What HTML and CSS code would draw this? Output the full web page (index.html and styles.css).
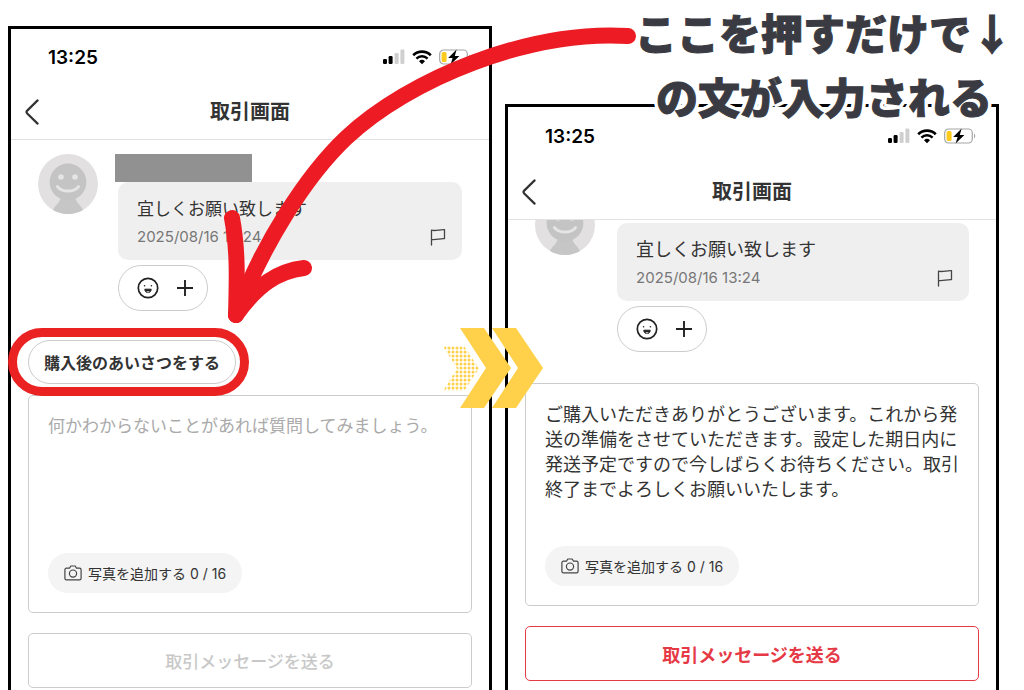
FILE: index.html
```html
<!DOCTYPE html>
<html lang="ja">
  <head>
    <meta charset="UTF-8" />
    <meta name="viewport" content="width=device-width, initial-scale=1.0" />
    <title>取引画面</title>
    <link rel="stylesheet" href="styles.css">
  </head>
  <body>
    <!-- Shared icons -->
    <svg class="icon-sprite" aria-hidden="true">
      <symbol id="icon-signal" viewBox="0 0 22 16">
        <rect x="0" y="10" width="4" height="5" rx="1.2" />
        <rect x="5.6" y="7" width="4" height="8" rx="1.2" />
        <rect x="11.6" y="4" width="4" height="11" rx="1.2" fill="#cfcfcf" />
        <rect x="17.4" y="0.5" width="4" height="14.5" rx="1.2" fill="#cfcfcf" />
      </symbol>
      <symbol id="icon-wifi" viewBox="0 0 20 16">
        <path d="M1.2 6.2a12.6 12.6 0 0 1 17.6 0" fill="none" stroke="#000" stroke-width="2.6" />
        <path d="M4.4 9.6a8 8 0 0 1 11.2 0" fill="none" stroke="#000" stroke-width="2.4" />
        <path d="M10 15.2l-3-3a4.4 4.4 0 0 1 6 0z" />
      </symbol>
      <symbol id="icon-battery" viewBox="0 0 32 16">
        <rect x="0.7" y="1" width="27.6" height="14" rx="4" fill="#fff" stroke="#a5a5a5" stroke-width="1.2" />
        <rect x="2.6" y="3" width="5" height="10" rx="1.6" fill="#fdcb1d" />
        <path d="M30 5.6c1.6.7 1.6 4.1 0 4.8z" fill="#a5a5a5" />
        <path d="M17.6 0.5L9.2 9h4.4l-2 6.6L20.4 7h-4.6z" />
      </symbol>
      <symbol id="icon-back" viewBox="0 0 14 26">
        <path d="M12.6 1.4L2.2 11.6a2 2 0 0 0 0 2.8l10.4 10.2" fill="none" stroke="#333" stroke-width="2.2" stroke-linecap="round" />
      </symbol>
      <symbol id="icon-avatar" viewBox="0 0 60 60">
        <circle cx="30" cy="30" r="30" fill="#e2e0e0" />
        <path d="M15 56c2-5 7-7 8-13h14c1 6 6 8 8 13a30 30 0 0 1-30 0z" fill="#c6c6c6" />
        <circle cx="30" cy="28" r="18.4" fill="#c4c4c4" />
        <circle cx="23" cy="23" r="2.8" fill="#e6e4e4" />
        <circle cx="37" cy="23" r="2.8" fill="#e6e4e4" />
        <path d="M19.4 32.6c5 6 16.2 6 21.2 0" fill="none" stroke="#e6e4e4" stroke-width="3" stroke-linecap="round" />
      </symbol>
      <symbol id="icon-flag" viewBox="0 0 16 18">
        <path d="M1.5 17V2.2c4.500 1.2 8.500-1 13-.6v9c-4.500-.4-8.500 1.600-13 .8" fill="none" stroke="#444" stroke-width="1.3" stroke-linecap="round" stroke-linejoin="round" />
      </symbol>
      <symbol id="icon-smile" viewBox="0 0 22 22">
        <circle cx="11" cy="11" r="9.7" fill="none" stroke="#222" stroke-width="1.7" />
        <circle cx="7.6" cy="8.8" r="0.8" fill="#222" />
        <circle cx="14.4" cy="8.8" r="0.8" fill="#222" />
        <path d="M7.8 12.2h6.400c0 4.600-6.400 4.600-6.400 0z" fill="#222" stroke="#222" stroke-linejoin="round" />
        <path d="M9.2 14.800c1-.8 2.600-.8 3.600 0-1 .9-2.600.9-3.600 0z" fill="#fff" />
      </symbol>
      <symbol id="icon-plus" viewBox="0 0 18 18">
        <path d="M9 1v16M1 9h16" fill="none" stroke="#222" stroke-width="1.9" />
      </symbol>
      <symbol id="icon-camera" viewBox="0 0 18 16">
        <path d="M2.500 3.200h3L6.800 1h4.400l1.300 2.200h3a1.600 1.600 0 0 1 1.600 1.600v8.400a1.600 1.600 0 0 1-1.600 1.600h-13A1.600 1.600 0 0 1 .9 13.200V4.800a1.600 1.600 0 0 1 1.600-1.600z" fill="none" stroke="#444" stroke-width="1.2" stroke-linejoin="round" />
        <circle cx="9" cy="8.6" r="3.6" fill="none" stroke="#444" stroke-width="1.2" />
      </symbol>
    </svg>

    <main class="guide">
      <section class="phone phone-before">
        <div class="phone-top">
          <div class="status-bar">
            <span class="time">13:25</span>
            <span class="status-icons">
              <svg width="22" height="16"><use href="#icon-signal" /></svg>
              <svg width="20" height="16"><use href="#icon-wifi" /></svg>
              <svg width="32" height="16"><use href="#icon-battery" /></svg>
            </span>
          </div>
          <header class="nav-bar">
            <button type="button" class="back-button" aria-label="戻る">
              <svg width="14" height="26"><use href="#icon-back" /></svg>
            </button>
            <h1>取引画面</h1>
          </header>
        </div>

        <div class="chat">
          <svg class="avatar" width="60" height="60"><use href="#icon-avatar" /></svg>
          <div class="message">
            <div class="name-mask"></div>
            <div class="bubble">
              <p class="bubble-text">宜しくお願い致します</p>
              <time class="bubble-date">2025/08/16 13:24</time>
              <button type="button" class="flag-button" aria-label="報告">
                <svg width="16" height="18"><use href="#icon-flag" /></svg>
              </button>
            </div>
            <button type="button" class="reaction" aria-label="リアクションを追加">
              <svg width="22" height="22"><use href="#icon-smile" /></svg>
              <svg width="18" height="18"><use href="#icon-plus" /></svg>
            </button>
          </div>
        </div>

        <form class="message-form">
          <button type="button" class="greeting-button">購入後のあいさつをする</button>
          <div class="composer">
            <textarea aria-label="メッセージ" placeholder="何かわからないことがあれば質問してみましょう。"></textarea>
            <button type="button" class="photo-button">
              <svg width="18" height="16"><use href="#icon-camera" /></svg>
              写真を追加する 0 / 16
            </button>
          </div>
          <button type="button" class="send-button" disabled>取引メッセージを送る</button>
        </form>
      </section>

      <section class="phone phone-after">
        <div class="phone-top">
          <div class="status-bar">
            <span class="time">13:25</span>
            <span class="status-icons">
              <svg width="22" height="16"><use href="#icon-signal" /></svg>
              <svg width="20" height="16"><use href="#icon-wifi" /></svg>
              <svg width="32" height="16"><use href="#icon-battery" /></svg>
            </span>
          </div>
          <header class="nav-bar">
            <button type="button" class="back-button" aria-label="戻る">
              <svg width="14" height="26"><use href="#icon-back" /></svg>
            </button>
            <h1>取引画面</h1>
          </header>
        </div>

        <div class="chat chat-scrolled">
          <svg class="avatar" width="60" height="60"><use href="#icon-avatar" /></svg>
          <div class="message">
            <div class="name-mask"></div>
            <div class="bubble">
              <p class="bubble-text">宜しくお願い致します</p>
              <time class="bubble-date">2025/08/16 13:24</time>
              <button type="button" class="flag-button" aria-label="報告">
                <svg width="16" height="18"><use href="#icon-flag" /></svg>
              </button>
            </div>
            <button type="button" class="reaction" aria-label="リアクションを追加">
              <svg width="22" height="22"><use href="#icon-smile" /></svg>
              <svg width="18" height="18"><use href="#icon-plus" /></svg>
            </button>
          </div>
        </div>

        <form class="message-form">
          <div class="composer">
            <textarea aria-label="メッセージ">ご購入いただきありがとうございます。これから発送の準備をさせていただきます。設定した期日内に発送予定ですので今しばらくお待ちください。取引終了までよろしくお願いいたします。</textarea>
            <button type="button" class="photo-button">
              <svg width="18" height="16"><use href="#icon-camera" /></svg>
              写真を追加する 0 / 16
            </button>
          </div>
          <button type="button" class="send-button">取引メッセージを送る</button>
        </form>
      </section>

      <!-- Annotations drawn over the two screens -->
      <svg class="step-arrow" width="100" height="80" viewBox="443 328 100 80" aria-hidden="true">
        <defs>
          <pattern id="dots" x="443" y="346" width="4" height="4" patternUnits="userSpaceOnUse">
            <circle cx="2" cy="2" r="1.5" fill="#ffd04a" />
          </pattern>
        </defs>
        <path d="M443 346h21l15 22.500-15 22.500h-21l14-22.500z" fill="url(#dots)" />
        <path d="M460 328h24l27 40-27 40h-24l26-40z" fill="#ffd04a" />
        <path d="M492 328h24l27 40-27 40h-24l26-40z" fill="#ffd04a" />
      </svg>
      <svg class="pointer-arrow" width="420" height="304" viewBox="218 22 420 304" aria-hidden="true">
        <g fill="none" stroke="#ed1c24" stroke-width="16" stroke-linecap="round" stroke-linejoin="round">
          <path d="M628 36C530 30 410 78 346 138 306 176 262 245 236 315" />
          <path d="M232 218C238 250 237 280 236 315" />
          <path d="M304 268C278 271 257 285 236 315" />
        </g>
      </svg>
      <p class="caption">ここを押すだけで↓<br />の文が入力される</p>
    </main>
  </body>
</html>
```
FILE: styles.css
```css
* {
  box-sizing: border-box;
  margin: 0;
  padding: 0;
}

body {
  font-family: Inter, "Noto Sans CJK JP", sans-serif;
  background-color: #ffffff;
  color: #333333;
}

button,
textarea {
  font-family: inherit;
  color: inherit;
  background: none;
  border: none;
}

button {
  cursor: pointer;
}

svg {
  display: block;
  flex-shrink: 0;
}

.icon-sprite {
  position: absolute;
  width: 0;
  height: 0;
}

.guide {
  position: relative;
  display: grid;
  grid-template-columns: 49fr 50fr;
  gap: 13px;
  min-height: 100vh;
  padding: 26px 25px 0 8px;
}

/* Phone screens */
.phone {
  --text-size: 17px;
  border: 3px solid #000000;
  border-bottom: none;
}

.phone-after {
  --text-size: 18px;
  margin-top: 78px;
}

.phone-top {
  position: relative;
  z-index: 1;
  background-color: #ffffff;
  border-bottom: 1px solid #e2e2e2;
}

.status-bar {
  display: flex;
  align-items: center;
  justify-content: space-between;
  height: 56px;
  padding: 0 18px 0 37px;
}

.phone-after .status-bar {
  height: 58px;
  padding-right: 20px;
}

.time {
  font-size: 19px;
  font-weight: 600;
  color: #000000;
}

.status-icons {
  display: flex;
  gap: 7px;
}

.nav-bar {
  display: grid;
  grid-template-columns: 40px 1fr 40px;
  align-items: center;
  height: 54px;
}

.back-button {
  padding-left: 14px;
}

.nav-bar h1 {
  font-size: 20px;
  font-weight: 700;
  line-height: 28px;
  text-align: center;
}

/* Chat */
.chat {
  display: flex;
  gap: 20px;
  padding: 14px 27px 0;
}

.chat-scrolled {
  gap: 22px;
  margin-top: -39px;
}

.message {
  flex: 1;
}

.name-mask {
  width: 137px;
  height: 28px;
  margin-left: -3px;
  background-color: #919191;
}

.chat-scrolled .name-mask {
  visibility: hidden;
}

.bubble {
  display: grid;
  grid-template-columns: 1fr auto;
  padding: 14px 16px 8px 19px;
  background-color: #efefef;
  border-radius: 10px;
}

.bubble-text {
  grid-column: 1 / -1;
  font-size: var(--text-size);
  line-height: 26px;
}

.bubble-date {
  font-size: 15px;
  line-height: 30px;
  color: #777777;
}

.flag-button {
  display: flex;
  align-items: center;
}

.reaction {
  display: flex;
  align-items: center;
  gap: 17px;
  height: 46px;
  margin-top: 5px;
  padding: 0 13px 0 18px;
  border: 1px solid #cccccc;
  border-radius: 23px;
}

/* Message form */
.message-form {
  padding: 29px 17px 3px;
}

.phone-after .message-form {
  padding-top: 31px;
}

.greeting-button {
  position: relative;
  display: block;
  height: 44px;
  margin-bottom: 11px;
  padding: 0 15px;
  border: 1px solid #cccccc;
  border-radius: 22px;
  font-size: 16px;
  font-weight: 700;
}

/* Red ring around the button to press */
.greeting-button::after {
  content: "";
  position: absolute;
  inset: -13px -14px -13px -21px;
  border: 9px solid #ea2222;
  border-radius: 34px;
}

.composer {
  padding: 18px 18px 19px 19px;
  border: 1px solid #cccccc;
  border-radius: 5px;
}

.composer textarea {
  display: block;
  width: 100%;
  height: 139px;
  font-size: var(--text-size);
  line-height: 25px;
  resize: none;
  overflow: hidden;
  outline: none;
}

.phone-after textarea {
  height: 144px;
}

.composer textarea::placeholder {
  color: #aaaaaa;
}

.photo-button {
  display: flex;
  align-items: center;
  gap: 6px;
  height: 40px;
  padding: 0 16px;
  border-radius: 20px;
  background-color: #f4f4f4;
  font-size: 14px;
}

.send-button {
  display: block;
  width: 100%;
  height: 55px;
  margin-top: 20px;
  border: 1px solid #e63946;
  border-radius: 5px;
  font-size: var(--text-size);
  font-weight: 700;
  color: #e63946;
}

.send-button:disabled {
  border-color: #cccccc;
  color: #c8c8c8;
  font-weight: 500;
  cursor: default;
}

/* Annotations */
.step-arrow {
  position: absolute;
  top: 328px;
  left: 443px;
}

.pointer-arrow {
  position: absolute;
  top: 22px;
  left: 218px;
  z-index: 2;
}

.caption {
  position: absolute;
  top: 0;
  right: 11px;
  z-index: 2;
  font-family: "Noto Sans CJK JP", sans-serif;
  font-size: 42px;
  font-weight: 900;
  line-height: 64px;
  text-align: center;
  white-space: nowrap;
  color: #3a3b42;
  -webkit-text-stroke: 1px #3a3b42;
  text-shadow: 4px 0 #ffffff, -4px 0 #ffffff, 0 4px #ffffff, 0 -4px #ffffff,
    3px 3px #ffffff, -3px 3px #ffffff, 3px -3px #ffffff, -3px -3px #ffffff;
}
```
